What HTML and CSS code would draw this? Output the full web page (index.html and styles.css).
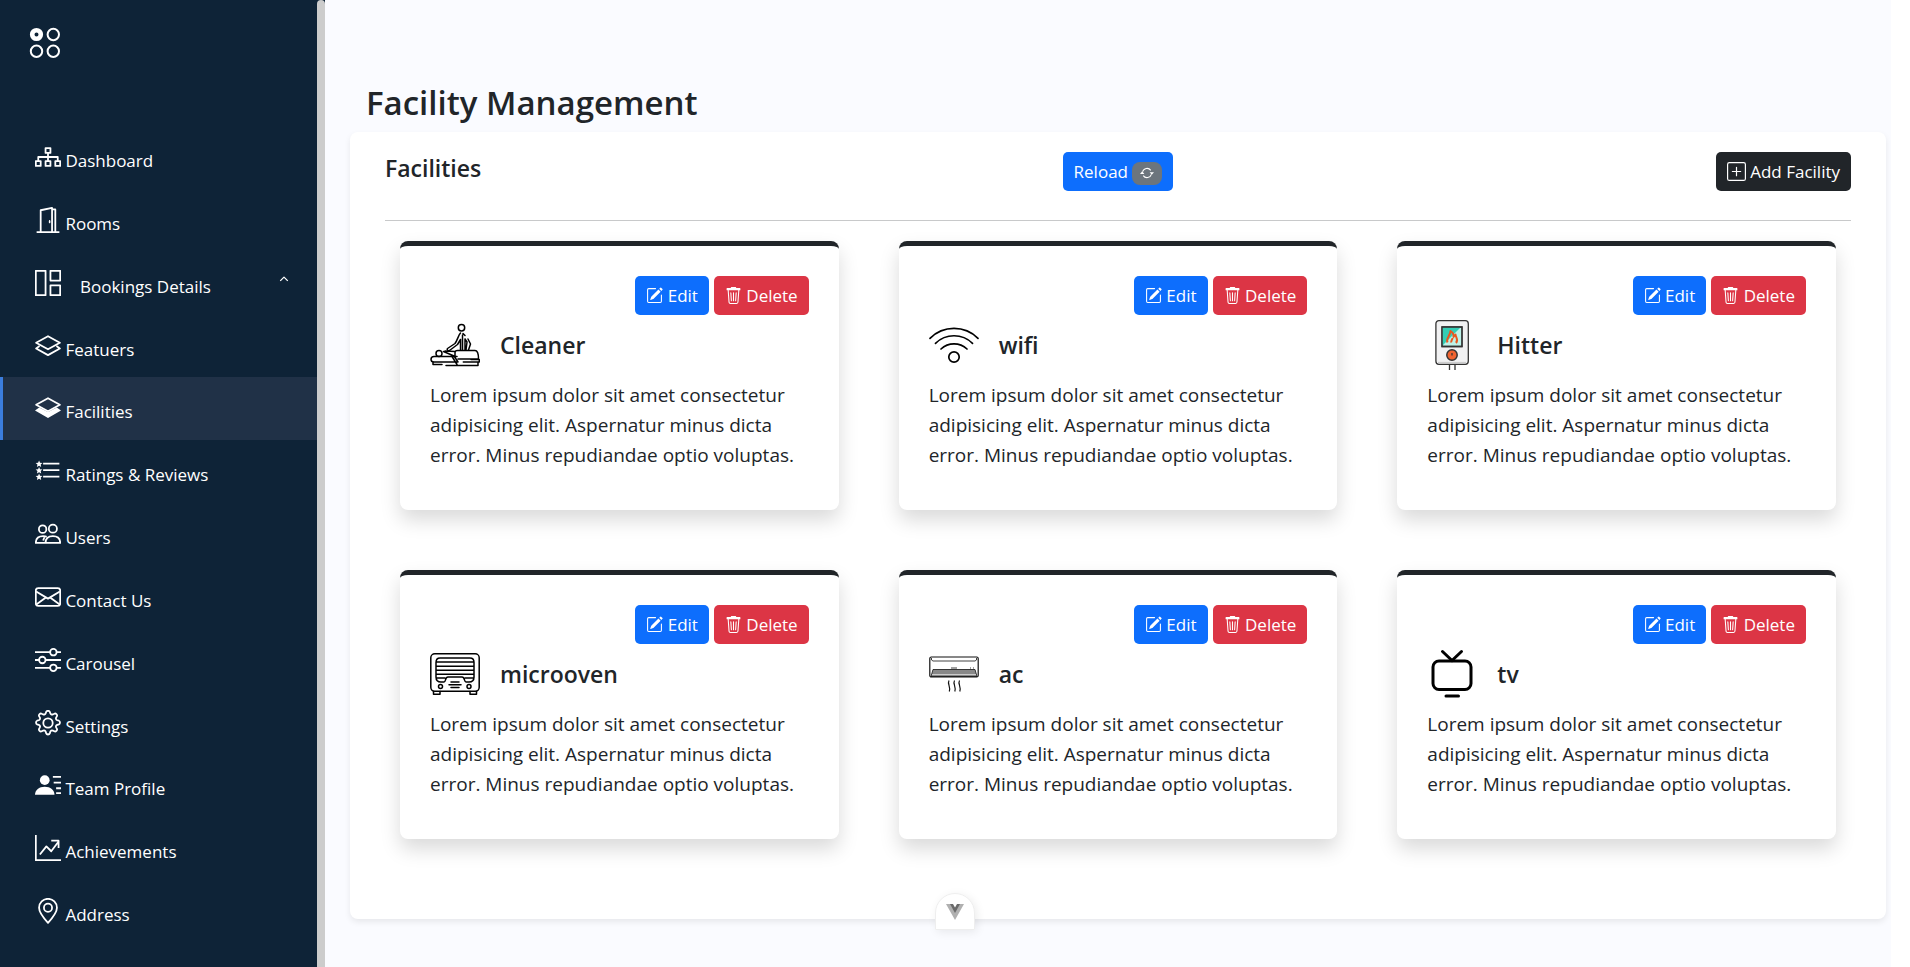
FILE: index.html
```html
<!DOCTYPE html>
<html lang="en">
<head>
<meta charset="utf-8">
<meta name="viewport" content="width=device-width, initial-scale=1">
<title>Facility Management</title>
<link rel="stylesheet" href="styles.css">
</head>
<body>
<svg class="sprite" aria-hidden="true">
  <symbol id="edit" viewBox="0 0 16 16"><path fill="currentColor" d="M15.502 1.94a.5.5 0 0 1 0 .706L14.459 3.69l-2-2L13.502.646a.5.5 0 0 1 .707 0l1.293 1.293zm-1.75 2.456-2-2L4.939 9.21a.5.5 0 0 0-.121.196l-.805 2.414a.25.25 0 0 0 .316.316l2.414-.805a.5.5 0 0 0 .196-.12l6.813-6.814z"/><path fill="currentColor" fill-rule="evenodd" d="M1 13.5A1.5 1.5 0 0 0 2.5 15h11a1.5 1.5 0 0 0 1.5-1.5v-6a.5.5 0 0 0-1 0v6a.5.5 0 0 1-.5.5h-11a.5.5 0 0 1-.5-.5v-11a.5.5 0 0 1 .5-.5H9a.5.5 0 0 0 0-1H2.5A1.5 1.5 0 0 0 1 2.500v11z"/></symbol>
  <symbol id="trash" viewBox="0 0 16 16"><g fill="none" stroke="currentColor" stroke-linecap="round" stroke-linejoin="round"><path d="M2 1.500h12v1H2zM6 1V.500h4V1M3 3l.8 11.200a1.400 1.400 0 0 0 1.300 1.300h5.800a1.400 1.400 0 0 0 1.300-1.300L13 3M5.500 5.500l.5 7.500M8 5.500V13M10.500 5.500 10 13"/></g></symbol>
</svg>
<div class="app">
  <aside class="sidebar">
    <a class="logo" href="#" aria-label="Home">
      <svg viewBox="0 0 32 32" fill="none" stroke="#fff" stroke-width="2"><circle cx="7.500" cy="7.500" r="4.300" stroke-width="4.600"/><circle cx="24.300" cy="7.500" r="5.700"/><circle cx="7.500" cy="24.300" r="5.700"/><circle cx="24.300" cy="24.300" r="5.700"/></svg>
    </a>
    <nav class="menu">
      <a class="item" href="#"><svg class="icon" viewBox="0 0 16 16"><path d="M6.500 2.500h3v3h-3zM8 5.500V8M2 10V8h12v2M8 8v2M.5 10.500h3v3h-3zM6.500 10.500h3v3h-3zM12.500 10.500h3v3h-3z"/></svg> Dashboard</a>
      <a class="item" href="#"><svg class="icon" viewBox="0 0 16 16"><path d="M1 15.500h14M3.500 15V2L10.500.6V15M10.500 1.500h2V15"/><path class="solid" d="M9 8c.3 0 .5.400.5 1s-.2 1-.5 1-.5-.4-.5-1 .2-1 .5-1"/></svg> Rooms</a>
      <a class="item item-group" href="#"><svg class="icon" viewBox="0 0 16 16"><path d="M.5.500h6v15h-6zM9.500.500h6v6h-6zM9.500 9.500h6v6h-6z"/></svg><span class="group-label">Bookings Details</span><svg class="chevron" viewBox="0 0 16 16"><path d="m2 11 6-6 6 6"/></svg></a>
      <a class="item" href="#"><svg class="icon" viewBox="0 0 16 16"><path d="M8 2 15.300 6 8 10 .7 6zM2.800 8 .7 9.500 8 13.600l7.300-4.100L13.200 8"/></svg> Featuers</a>
      <a class="item active" href="#" aria-current="page"><svg class="icon" viewBox="0 0 16 16"><path d="M8 2 15.300 6 8 10 .7 6z"/><path class="solid" d="M2.600 7.700 8 10.400l5.400-2.700L16 9.500l-8 4.600-8-4.600z"/></svg> Facilities</a>
      <a class="item" href="#"><svg class="icon" viewBox="0 0 16 16"><path d="M5 3.500h10M5 7.500h10M5 11.500h10"/><path class="solid" d="m2.500 1.500.6 1.400 1.500.1-1.100 1 .300 1.500-1.300-.8-1.300.8.3-1.500-1.100-1 1.500-.1zM2.500 5.500l.6 1.400 1.500.1-1.100 1 .3 1.500-1.300-.8-1.300.8.3-1.500-1.100-1 1.500-.1zM2.500 9.500l.6 1.400 1.500.1-1.100 1 .3 1.500-1.300-.8-1.300.8.3-1.500-1.100-1 1.500-.1z"/></svg> Ratings &amp; Reviews</a>
      <a class="item" href="#"><svg class="icon" viewBox="0 0 16 16"><circle cx="11" cy="4.700" r="2.500"/><circle cx="4.700" cy="5" r="2.300"/><path d="M6.500 13.500h9c0-2.700-1.700-4.200-4.500-4.200s-4.500 1.500-4.500 4.200zM6.300 13.500H.5c0-2.700 1.700-4.200 4.500-4.200 1 0 1.600.1 2.200.4M5 12l.8-2"/></svg> Users</a>
      <a class="item" href="#"><svg class="icon" viewBox="0 0 16 16"><rect x=".5" y="2.500" width="15" height="11" rx="1.500"/><path d="m.7 4.600 7.300 4.400 7.300-4.400M.8 12.600l5.900-4.300M15.200 12.600 9.300 8.300"/></svg> Contact Us</a>
      <a class="item" href="#"><svg class="icon" viewBox="0 0 16 16"><path d="M0 3.200h9.300M13.300 3.200H16M0 8h2.500M6.500 8H16M0 12.800h9.300M13.300 12.800H16"/><circle cx="11.300" cy="3.200" r="2"/><circle cx="4.500" cy="8" r="2"/><circle cx="11.300" cy="12.800" r="2"/></svg> Carousel</a>
      <a class="item" href="#"><svg class="icon" viewBox="0 0 16 16"><circle cx="8" cy="8" r="2.900"/><path d="M6.900 1.100c.3-.8 1.900-.8 2.200 0l.3.900c.2.700.9 1 1.600.7l.9-.4c.9-.5 2 .7 1.600 1.500l-.5.900c-.3.700 0 1.400.7 1.600l1 .3c.9.300.9 1.900 0 2.200l-1 .3c-.7.200-1 .9-.7 1.600l.5.900c.4.800-.7 2-1.600 1.500l-.9-.4c-.7-.3-1.400 0-1.600.7l-.3 1c-.3.900-1.900.9-2.200 0l-.3-1c-.2-.7-.9-1-1.600-.7l-.9.400c-.9.500-2-.7-1.600-1.500l.5-.9c.3-.7 0-1.400-.7-1.600l-1-.3c-.9-.3-.9-1.900 0-2.200l1-.3c.7-.2 1-.9.700-1.600l-.5-.9c-.4-.8.700-2 1.600-1.500l.9.400c.7.300 1.400 0 1.600-.7z"/></svg> Settings</a>
      <a class="item" href="#"><svg class="icon" viewBox="0 0 16 16"><circle class="solid" cx="6" cy="5" r="3"/><path class="solid" d="M0 14c0-3 2.500-5 6-5s6 2 6 5z"/><path d="M11 3h5M11.500 6.500H16M13 10h3M13 13h3"/></svg> Team Profile</a>
      <a class="item" href="#"><svg class="icon" viewBox="0 0 16 16"><path d="M.5 0v15.500H16M3 12l4-5 3 3 4.500-6M10 3.500h4.500V8"/></svg> Achievements</a>
      <a class="item" href="#"><svg class="icon" viewBox="0 0 16 16"><circle cx="8" cy="6" r="2.500"/><path d="M8 15.300C5 12 2.500 8.800 2.500 6a5.500 5.500 0 0 1 11 0c0 2.800-2.500 6-5.500 9.300z"/></svg> Address</a>
    </nav>
  </aside>
  <div class="sidebar-track"><div class="sidebar-thumb"></div></div>
  <main class="main">
    <h1 class="page-title">Facility Management</h1>
    <section class="panel">
      <header class="panel-head">
        <h2 class="panel-title">Facilities</h2>
        <button class="btn btn-blue" type="button">Reload <span class="badge"><svg viewBox="0 0 16 16" fill="none" stroke="currentColor" stroke-width="1.200"><path d="M3 6.500A5.200 5.200 0 0 1 12.300 5M13 9.500A5.200 5.200 0 0 1 3.700 11"/><path fill="currentColor" stroke="none" d="M11 7h5l-2.500 3zM0 9h5L2.500 6z"/></svg></span></button>
        <button class="btn btn-dark" type="button"><svg class="btn-icon-lg" viewBox="0 0 16 16" fill="none" stroke="currentColor"><rect x=".5" y=".5" width="15" height="15" rx="1.500"/><path stroke-linecap="round" d="M8 4.500v7M4.500 8h7"/></svg> Add Facility</button>
      </header>
      <div class="cards">
        <article class="card">
          <div class="actions"><button class="btn btn-blue" type="button"><svg class="btn-icon"><use href="#edit"/></svg> Edit</button><button class="btn btn-red" type="button"><svg class="btn-icon"><use href="#trash"/></svg> Delete</button></div>
          <div class="card-head"><svg class="pic" viewBox="0 0 50 50" fill="none" stroke="#000" stroke-width="1.500" stroke-linecap="round" stroke-linejoin="round"><circle cx="31.500" cy="7.800" r="3.200"/><path d="M30.500 13c-2 2-3 7-5.500 10.500L17.500 28.500c-1 1.500.5 2.500 2 2l8-6 3-5V30M33 13.500l2 2M32.500 15v15M35 19v11M35 19l2 3-1 8M38 19l2.500 5-2 6"/><circle cx="9" cy="33.500" r="3"/><path d="M13.500 31.500 24 36l4 6M15 31l10 .5M25 36v-3.500c0-1 1-2 2.500-2H45c2.500 0 3.500 3 3.500 8.500H28M27 36.500h-23c-4 0-4 5.500 0 5.500h24M22 36.500l5 8M41 39.500h8.300v2.500h-16M3 42v2.500h9M16 45.500h32V42"/></svg><h3 class="card-title">Cleaner</h3></div>
          <p class="card-text">Lorem ipsum dolor sit amet consectetur adipisicing elit. Aspernatur minus dicta error. Minus repudiandae optio voluptas.</p>
        </article>
        <article class="card">
          <div class="actions"><button class="btn btn-blue" type="button"><svg class="btn-icon"><use href="#edit"/></svg> Edit</button><button class="btn btn-red" type="button"><svg class="btn-icon"><use href="#trash"/></svg> Delete</button></div>
          <div class="card-head"><svg class="pic" viewBox="0 0 50 50" fill="none" stroke="#000" stroke-width="1.700" stroke-linecap="round"><path d="M1 18.300a34 34 0 0 1 48 0M6.500 23.300a26.500 26.500 0 0 1 37 0M12 29a19 19 0 0 1 26 0"/><circle cx="25" cy="37" r="5.200"/></svg><h3 class="card-title">wifi</h3></div>
          <p class="card-text">Lorem ipsum dolor sit amet consectetur adipisicing elit. Aspernatur minus dicta error. Minus repudiandae optio voluptas.</p>
        </article>
        <article class="card">
          <div class="actions"><button class="btn btn-blue" type="button"><svg class="btn-icon"><use href="#edit"/></svg> Edit</button><button class="btn btn-red" type="button"><svg class="btn-icon"><use href="#trash"/></svg> Delete</button></div>
          <div class="card-head"><svg class="pic" viewBox="0 0 50 50" fill="none" stroke="#333" stroke-width="1.300"><rect x="8.900" y=".7" width="32.400" height="43.600" rx="3" fill="#f1f1f2"/><path d="M11 42.500h28" stroke="#ccc"/><path d="M22.500 44.500V50M28 44.500V50"/><path fill="#bdf2e8" d="M15 7h20v19.500H15z"/><path fill="#35cdb4" stroke="none" d="M15.500 7.500h18L15.500 25.500z"/><path d="M15 7h20v19.500H15z"/><path stroke="#e9571f" stroke-width="2" stroke-linejoin="round" d="M20.500 22.500c-2-4 2.500-6 3-11.500 2.500 1.500 3.500 3 3 6l2-2.500c0 3 3.500 5 .5 8.500M24.500 22.500c-1-2 1-2.500 1-4.500"/><circle cx="25" cy="35" r="5.200" fill="#f0622f" stroke-width="1.500"/><path d="M25 33v2.500"/></svg><h3 class="card-title">Hitter</h3></div>
          <p class="card-text">Lorem ipsum dolor sit amet consectetur adipisicing elit. Aspernatur minus dicta error. Minus repudiandae optio voluptas.</p>
        </article>
        <article class="card">
          <div class="actions"><button class="btn btn-blue" type="button"><svg class="btn-icon"><use href="#edit"/></svg> Edit</button><button class="btn btn-red" type="button"><svg class="btn-icon"><use href="#trash"/></svg> Delete</button></div>
          <div class="card-head"><svg class="pic" viewBox="0 0 50 50" fill="none" stroke="#000" stroke-width="1.500" stroke-linejoin="round" stroke-linecap="round"><rect x=".8" y="4.800" width="48.400" height="37.500" rx="4"/><path d="M6 13.500c0-3 1-4.500 4-4.500h30c3 0 4 1.500 4 4.500V28c0 3-2 5-5 5h-3c-2 0-1-5-4-5H18c-3 0-2 5-4 5h-3c-3 0-5-2-5-5zM7 13h36M6 17.300h38M6 21.300h38M6 25.300h38M6 29h9M35 29h9M21 33h8M19 35.800h12M21 38.500h8M3.500 42.500v2.800H10v-2.800M40 42.500v2.800h6.500v-2.800"/><circle cx="10.500" cy="37.500" r="2"/><circle cx="39" cy="37.500" r="2"/></svg><h3 class="card-title">microoven</h3></div>
          <p class="card-text">Lorem ipsum dolor sit amet consectetur adipisicing elit. Aspernatur minus dicta error. Minus repudiandae optio voluptas.</p>
        </article>
        <article class="card">
          <div class="actions"><button class="btn btn-blue" type="button"><svg class="btn-icon"><use href="#edit"/></svg> Edit</button><button class="btn btn-red" type="button"><svg class="btn-icon"><use href="#trash"/></svg> Delete</button></div>
          <div class="card-head"><svg class="pic" viewBox="0 0 50 50" fill="none" stroke="#111" stroke-width="1.200"><path fill="#888" stroke-width=".8" d="M4 20.500h42l2 7H2z"/><path stroke="#ccc" d="M3 25.500h44"/><rect x=".8" y="8" width="48.400" height="20" rx="1.500"/><path stroke-width=".8" d="M2.500 9v2l1.500 1h42l1.500-1V9M22 19h6M41 19h1M44 19h1"/><path stroke-width="1.200" d="M20 31.500c-2 3.500 2 6 .3 11M25.500 31.500c-2 3.500 2 6 .3 11M30.500 31.500c-2 3.500 2 6 .3 11"/></svg><h3 class="card-title">ac</h3></div>
          <p class="card-text">Lorem ipsum dolor sit amet consectetur adipisicing elit. Aspernatur minus dicta error. Minus repudiandae optio voluptas.</p>
        </article>
        <article class="card">
          <div class="actions"><button class="btn btn-blue" type="button"><svg class="btn-icon"><use href="#edit"/></svg> Edit</button><button class="btn btn-red" type="button"><svg class="btn-icon"><use href="#trash"/></svg> Delete</button></div>
          <div class="card-head"><svg class="pic" viewBox="0 0 50 50" fill="none" stroke="#000" stroke-width="3" stroke-linecap="round"><rect x="6" y="12" width="38" height="28.500" rx="6"/><path d="m15.500 2.500 9.500 9 9.500-9M19 47h12.500"/></svg><h3 class="card-title">tv</h3></div>
          <p class="card-text">Lorem ipsum dolor sit amet consectetur adipisicing elit. Aspernatur minus dicta error. Minus repudiandae optio voluptas.</p>
        </article>
      </div>
    </section>
  </main>
</div>
<button class="devtools" type="button" aria-label="Toggle devtools"><svg viewBox="0 0 18 16"><path fill="#b0b0b0" d="M0 0h18L9 16z"/><path fill="#6a6a6a" d="M4 0h10L9 9z"/><path fill="#fff" d="M7 0h4L9 3.500z"/></svg></button>
</body>
</html>
```
FILE: styles.css
```css
* { box-sizing: border-box; }
body {
  margin: 0;
  background: #fff;
  color: #212529;
  font-family: "Open Sans", "Noto Sans", sans-serif;
  font-size: 19px;
  line-height: 30px;
}
.sprite { display: none; }
.app { display: flex; min-height: 100vh; padding-right: 19px; }

.sidebar {
  flex: 0 0 317px;
  display: flex;
  flex-direction: column;
  padding-bottom: 25px;
  background: #0e2337;
}
.logo { display: block; height: 126px; padding: 27px 29px; }
.logo svg { display: block; width: 32px; height: 32px; }
.menu { flex: 1; display: grid; grid-auto-rows: 1fr; }
.item {
  display: block;
  padding: 18px 28px 0 32px;
  border-left: 3px solid transparent;
  color: #fff;
  font-size: 17px;
  text-decoration: none;
  white-space: nowrap;
}
.item.active { border-left-color: #3b7ddd; background: #203147; }
.item-group { display: flex; }
.group-label { flex: 1; margin-left: 19px; line-height: 34px; }
.icon, .chevron {
  width: 26px;
  height: 26px;
  vertical-align: -3px;
  fill: none;
  stroke: #fff;
  stroke-width: 1.1;
  stroke-linejoin: round;
}
.icon .solid { fill: #fff; stroke: none; }
.chevron { width: 10px; height: 10px; margin-top: 4px; stroke-width: 2; }

.sidebar-track { flex: 0 0 8px; display: flex; background: #0e2337; }
.sidebar-thumb { flex: 1; border-radius: 4px 4px 0 0; background: #ccc; }

.main { flex: 1; min-width: 0; padding: 82px 5px 49px 25px; background: #fafbff; }
.page-title { margin: 0 0 8px; padding-left: 16px; font-size: 33px; font-weight: 600; line-height: 42px; }
.panel {
  padding: 20px 35px 80px;
  border-radius: 8px;
  background: #fff;
  box-shadow: 0 3px 6px rgba(0, 0, 0, 0.08);
}
.panel-head {
  display: grid;
  grid-template-columns: 1fr auto 1fr;
  align-items: start;
  padding-bottom: 29px;
  border-bottom: 1px solid #c8c9ca;
}
.panel-head .btn-dark { justify-self: end; }
.panel-title { margin: 0; font-size: 23px; font-weight: 600; line-height: 32px; }
.cards {
  display: grid;
  grid-template-columns: repeat(3, 1fr);
  gap: 60px;
  padding: 20px 15px 0;
}
.card {
  padding: 30px;
  border-top: 5px solid #212529;
  border-radius: 8px;
  background: #fff;
  box-shadow: 0 10px 20px rgba(0, 0, 0, 0.15);
}
.actions { display: flex; justify-content: flex-end; gap: 5px; margin-bottom: 5px; }
.card-head { display: flex; align-items: center; gap: 20px; margin-bottom: 10px; }
.pic { width: 50px; height: 50px; }
.card-title { margin: 0; font-size: 23px; font-weight: 600; line-height: 30px; }
.card-text { margin: 0 0 10px; }

.btn {
  height: 39px;
  padding: 0 11px;
  border: 0;
  border-radius: 5px;
  color: #fff;
  font: inherit;
  font-size: 17px;
  line-height: 39px;
  white-space: nowrap;
}
.btn-blue { background: #0d6efd; }
.btn-red { background: #dc3545; }
.btn-dark { background: #212529; }
.btn-icon { width: 17px; height: 17px; vertical-align: -2px; }
.btn-icon-lg { width: 19px; height: 19px; vertical-align: -3px; }
.badge {
  display: inline-flex;
  justify-content: center;
  align-items: center;
  width: 30px;
  height: 23px;
  border-radius: 8px;
  background: #6c757d;
  vertical-align: middle;
}
.badge svg { width: 14px; height: 14px; }

.devtools {
  position: fixed;
  bottom: 37px;
  left: 50%;
  width: 40px;
  height: 37px;
  margin-left: -20px;
  padding: 0;
  border: 1px solid #eee;
  border-radius: 20px 20px 0 0;
  background: #fff;
  box-shadow: 2px 2px 10px rgba(0, 0, 0, 0.08);
}
.devtools svg { display: block; width: 18px; height: 16px; margin: 0 auto; }
```
